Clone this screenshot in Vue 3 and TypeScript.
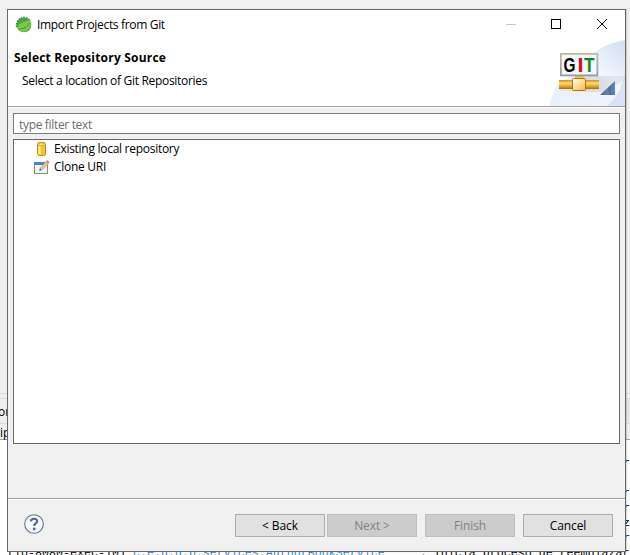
<script setup lang="ts">
interface Source { id: string; label: string }
interface Action { label: string; disabled: boolean; kind: string }

const sources: Source[] = [
  { id: 'local', label: 'Existing local repository' },
  { id: 'clone', label: 'Clone URI' },
]
const actions: Action[] = [
  { label: '< Back', disabled: false, kind: 'back' },
  { label: 'Next >', disabled: true, kind: 'next' },
  { label: 'Finish', disabled: true, kind: 'finish' },
  { label: 'Cancel', disabled: false, kind: 'cancel' },
]
const tail: string[] = ['r', '', 'r', 'r', 'z', 'r']
const thread = '[io-8080-exec-10] '
const message = '     : Inicia proceso de reemplazar'
</script>

<template>
  <main class="desktop">
    <div class="backdrop">
      <div class="tabs"></div>
      <div class="toolbar"><span>or</span></div>
      <div class="caption"><span>ip</span></div>
      <div class="console">
        <div v-for="(t, i) in tail" :key="i" class="line end">{{ t }}</div>
        <div class="line last"><span>{{ thread }}</span><span class="logger">c.e.u.d.b.services.AuthorBookService</span><span>{{ message }}</span></div>
      </div>
    </div>

    <section class="dialog">
      <header class="head">
        <div class="titlebar">
          <svg class="leaf" viewBox="0 0 18 18">
            <circle cx="9" cy="9" r="7.300" fill="#4ca642" />
            <path d="M2 11A7.400 7.400 0 0 1 14.500 4" fill="none" stroke="#2f8a3a" stroke-width="2" stroke-dasharray="1.500 1" />
            <path d="M2.400 11.500C3.500 6 9 7.800 14.800 3.300C17.500 8 15 14.800 9.500 15.600C6 15.800 3.200 14 2.400 11.500Z" fill="#7cc948" />
            <path d="M3.500 13C8 13 12.500 11.500 14.500 7" fill="none" stroke="#3f9a3c" />
          </svg>
          <span class="title">Import Projects from Git</span>
          <svg class="controls" viewBox="0 0 102 12">
            <path d="M0 6.500H10" stroke="#c8c8c8" />
            <rect x="45.500" y="1.500" width="9" height="9" fill="none" stroke="#000" />
            <path d="M91 1L101 11M101 1L91 11" stroke="#000" />
          </svg>
        </div>
        <h1>Select Repository Source</h1>
        <p>Select a location of Git Repositories</p>
        <svg class="banner" viewBox="0 0 75 66">
          <defs>
            <linearGradient id="sky" x1="0" y1="1" x2="1" y2="0"><stop offset="0" stop-color="#fff" /><stop offset=".55" stop-color="#f6f9fd" /><stop offset="1" stop-color="#d0def1" /></linearGradient>
            <linearGradient id="low" x1="0" y1="0" x2="1" y2="0"><stop offset="0" stop-color="#e9f0f9" /><stop offset="1" stop-color="#f2f6fc" /></linearGradient>
            <linearGradient id="pipe" x1="0" y1="0" x2="0" y2="1"><stop offset="0" stop-color="#cf8b17" /><stop offset=".35" stop-color="#ffdd75" /><stop offset=".7" stop-color="#e6a522" /><stop offset="1" stop-color="#ae6705" /></linearGradient>
            <linearGradient id="node" x1="0" y1="0" x2="1" y2="1"><stop offset="0" stop-color="#fff" /><stop offset="1" stop-color="#f3ba39" /></linearGradient>
            <linearGradient id="frame" x1="0" y1="0" x2="0" y2="1"><stop offset="0" stop-color="#c2b9a1" /><stop offset="1" stop-color="#8c9db5" /></linearGradient>
            <linearGradient id="tri" x1="0" y1="0" x2="1" y2="0"><stop offset="0" stop-color="#27446f" /><stop offset="1" stop-color="#6488b8" /></linearGradient>
            <linearGradient id="shade" x1="0" y1="0" x2="1" y2="0"><stop offset="0" stop-color="#bcc1cb" stop-opacity="0" /><stop offset=".5" stop-color="#bcc1cb" stop-opacity=".5" /><stop offset="1" stop-color="#bcc1cb" stop-opacity=".25" /></linearGradient>
          </defs>
          <path d="M34 22C46 9 58 3 75 0V66H0C1 53 20 44 34 44Z" fill="url(#sky)" />
          <path d="M0 66C1 56 4 49 9 43L75 38V66Z" fill="url(#low)" />
          <path d="M57 66C68 56 73 46 75 30V66Z" fill="#d8e4f5" />
          <path d="M2 51L20 36H75V40L52 52Z" fill="url(#shade)" />
          <rect x="10.900" y="13.900" width="36.500" height="21.500" fill="#f4f8fa" stroke="url(#frame)" stroke-width="1.800" />
          <text x="13.500" y="31.500" textLength="12" lengthAdjust="spacingAndGlyphs" class="git">G</text>
          <text x="27.500" y="31.500" textLength="6" lengthAdjust="spacingAndGlyphs" class="git red">I</text>
          <text x="34" y="31.500" textLength="10.500" lengthAdjust="spacingAndGlyphs" class="git green">T</text>
          <rect x="25" y="36" width="9" height="3" fill="url(#pipe)" />
          <rect x="9" y="40" width="40" height="9" fill="url(#pipe)" />
          <rect x="22.500" y="38.500" width="13" height="12" rx="1" fill="url(#node)" stroke="#b57213" />
          <path d="M50 55L65 41V55Z" fill="url(#tri)" />
          <path d="M50 55L58 47.500L59 55Z" fill="#9fb4d0" opacity=".35" />
        </svg>
      </header>

      <div class="content">
        <input class="filter" type="text" placeholder="type filter text" />
        <ul class="list">
          <li v-for="s in sources" :key="s.id">
            <svg v-if="s.id === 'local'" viewBox="0 0 16 16">
              <rect x="3.500" y="1.500" width="8" height="13" rx="2.200" fill="#efc62c" stroke="#bd8618" />
              <path d="M5.500 5V13" stroke="#fff3a4" stroke-width="2" />
              <ellipse cx="7.500" cy="3.300" rx="3.500" ry="1.500" fill="#ffe56d" stroke="#c9931e" stroke-width=".7" />
            </svg>
            <svg v-else viewBox="0 0 16 16">
              <rect x=".5" y="3.500" width="13" height="11" fill="#eaf5fb" stroke="#8f8a72" />
              <path d="M0 3H14V6H0Z" fill="#3e86c5" />
              <path d="M5.500 11.500L6.500 8.500L12.500 2L14.800 4.200L8.500 10.500Z" fill="#efc18a" stroke="#b98a62" stroke-width=".5" />
              <path d="M12 2.500L13.500 1L15.500 3L14 4.800Z" fill="#d98372" />
              <path d="M5.300 11.700L6 9.800L7.300 11Z" fill="#333" />
            </svg>
            <span :class="s.id">{{ s.label }}</span>
          </li>
        </ul>
      </div>

      <footer class="foot">
        <svg class="help" viewBox="0 0 20 20">
          <circle cx="10" cy="10" r="9.300" fill="#f5f7fa" stroke="#5f7290" stroke-width="1.100" />
          <path d="M6.900 7.400C7 3.900 13.200 3.900 13.200 7.200C13.200 9.500 10.200 9.400 10.200 12" fill="none" stroke="#53698c" stroke-width="2.100" />
          <circle cx="10.200" cy="15" r="1.400" fill="#53698c" />
        </svg>
        <button v-for="a in actions" :key="a.kind" :class="a.kind" :disabled="a.disabled">{{ a.label }}</button>
      </footer>
    </section>
  </main>
</template>

<style>
body { margin: 0; overflow: hidden; }
</style>

<style scoped>
* { box-sizing: border-box; }
.desktop { position: relative; width: 630px; height: 555px; overflow: hidden; background: #f0f0f0; font: 12px/16px "Open Sans", "Noto Sans", sans-serif; color: #000; }
.backdrop { position: absolute; inset: 0; padding-top: 393px; }
.tabs { height: 6px; border-top: 1px solid #dcdcdc; border-bottom: 1px solid #dcdcdc; }
.toolbar { height: 25px; background: linear-gradient(90deg, #f0f0f0 50%, #e6e6e6 50%); border-bottom: 1px solid #dadada; }
.toolbar span { display: block; margin-left: -2px; padding-top: 5px; }
.caption { height: 16px; border-bottom: 1px solid #a0a0a0; }
.caption span { display: block; line-height: 17px; }
.console { height: 115px; background: #fff; padding-top: 16px; font: 11.67px/15px "Liberation Mono", monospace; white-space: pre; overflow: hidden; }
.line { height: 15px; }
.end { text-align: right; }
.last { padding-left: 7px; }
.logger { color: #2c8ad8; }
.dialog { position: relative; width: 619px; height: 543px; margin: 9px 0 0 7px; display: flex; flex-direction: column; background: #f0f0f0; border: 1px solid #696969; box-shadow: 1px 0 1px #0002; }
.desktop::before { content: ""; display: table; }
.head { position: relative; height: 97px; flex: none; background: #fff; border-bottom: 1px solid #a0a0a0; }
.titlebar { height: 29px; display: flex; align-items: center; padding: 0 17px 0 7px; }
.leaf { width: 18px; height: 18px; }
.title { margin-left: 4px; flex: 1; letter-spacing: -.33px; }
.controls { width: 102px; height: 12px; margin-top: -1px; }
h1 { margin: 10px 0 0 6px; font-size: 12px; line-height: 17px; font-weight: 700; letter-spacing: .2px; }
p { margin: 6px 0 0 14px; line-height: 17px; letter-spacing: -.31px; }
.banner { position: absolute; right: 0; bottom: 0; width: 75px; height: 66px; }
.git { font: 700 21px "Liberation Sans", sans-serif; }
.red { fill: #c70f22; }
.green { fill: #078b1c; }
.content { flex: 1; padding: 5px 5px 0; border-top: 1px solid #fff; display: flex; flex-direction: column; gap: 5px; }
.filter { height: 21px; width: 607px; padding: 1px 5px 0; border: 1px solid #7a7a7a; background: #fff; font: inherit; letter-spacing: -.33px; outline: 0; }
.filter::placeholder { color: #6d6d6d; opacity: 1; }
.list { width: 607px; height: 305px; margin: 0; padding: 0 0 0 20px; border: 1px solid #696969; background: #fff; list-style: none; }
li { height: 18px; display: flex; align-items: center; gap: 4px; letter-spacing: -.28px; }
li svg { width: 16px; height: 16px; }
.foot { height: 53px; flex: none; display: flex; align-items: flex-start; padding: 15px 12px 0 16px; border-top: 1px solid #a0a0a0; box-shadow: inset 0 1px #fff; }
.help { width: 20px; height: 20px; margin-right: auto; }
button { width: 90px; height: 23px; padding: 0; border: 1px solid #adadad; border-radius: 0; background: #e1e1e1; font: inherit; letter-spacing: -.1px; color: #000; }
button:disabled { background: #ccc; border-color: #bfbfbf; color: #838383; }
.next { margin-left: 2px; }
.finish, .cancel { margin-left: 8px; }
</style>
